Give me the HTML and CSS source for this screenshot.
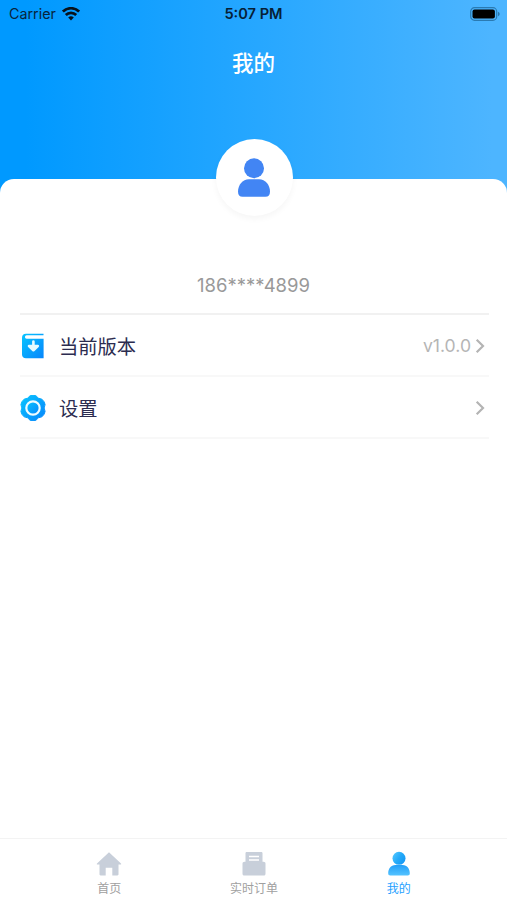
FILE: index.html
```html
<!DOCTYPE html>
<html lang="zh-CN">

<head>
  <meta charset="UTF-8">
  <meta name="viewport" content="width=device-width, initial-scale=1.0">
  <title>我的</title>
  <link rel="stylesheet" href="styles.css">
</head>

<body>
  <header class="header">
    <div class="status-bar">
      <div class="carrier">
        <span>Carrier</span>
        <svg class="wifi" viewBox="0 0 18 14" fill="none" stroke="#08121c" stroke-width="2.7">
          <path d="M.9 4.6a11.4 11.4 0 0 1 16.2 0" />
          <path d="M3.8 8a7.3 7.3 0 0 1 10.4 0" />
          <path d="M6.2 10.5a4 4 0 0 1 5.6 0L9 13.4z" fill="#08121c" stroke="none" />
        </svg>
      </div>
      <span class="time">5:07 PM</span>
      <svg class="battery" viewBox="0 0 30 14">
        <rect x="0.7" y="0.7" width="26" height="12.6" rx="3.8" fill="none" stroke="#1f6798" stroke-opacity="0.75" stroke-width="1.2" />
        <rect x="2.5" y="2.5" width="22.4" height="9" rx="2" fill="#000" />
        <path d="M28 4.8c2.2.8 2.2 3.6 0 4.4z" fill="#1f6798" fill-opacity="0.8" />
      </svg>
    </div>
    <h1>我的</h1>
  </header>

  <main class="sheet">
    <div class="avatar">
      <svg viewBox="0 0 34 40" fill="#4285f4">
        <circle cx="17" cy="10.2" r="10" />
        <path d="M12 21.3h10c6.500 0 11 5.700 11 12.500 0 3.300-1.500 5-4.600 5H5.600c-3.100 0-4.600-1.700-4.600-5C1 27 5.500 21.300 12 21.300z" />
      </svg>
    </div>
    <p class="phone">186****4899</p>

    <ul class="menu">
      <li>
        <svg class="icon" viewBox="0 0 26 26">
          <defs>
            <linearGradient id="blue" x1="0" y1="0" x2="1" y2="1">
              <stop offset="0" stop-color="#08c5ff" />
              <stop offset="1" stop-color="#0785fb" />
            </linearGradient>
          </defs>
          <path d="M6 .7h17.500v1.600H6.700c-2.200 0-2.200 3.500 0 3.500h16.900v19.400H6c-2.500 0-4-1.400-4-3.700V4.700C2 2.200 3.500.7 6 .7z" fill="url(#blue)" />
          <path d="M13.400 8.500v6M9 13l4.400 4.200L17.800 13z" fill="#e8fbff" stroke="#e8fbff" stroke-width="2.600" stroke-linecap="round" stroke-linejoin="round" />
        </svg>
        <span class="label">当前版本</span>
        <span class="value">v1.0.0</span>
        <svg class="arrow" viewBox="0 0 10 16"><path d="M1.700 1.700L8 8l-6.300 6.300" /></svg>
      </li>
      <li>
        <svg class="icon" viewBox="0 0 26 26">
          <path d="M10 .8Q13-.2 16 .8 17.800 3.800 21.900 4.200 24.600 6.500 25.100 9.600 23.200 13 25.100 16.400 24.600 19.500 21.900 21.800 17.800 22.200 16 25.200 13 26.200 10 25.200 8.200 22.200 4.100 21.800 1.400 19.500.9 16.400 2.800 13 .9 9.600 1.400 6.500 4.100 4.200 8.200 3.800 10 .8z" fill="url(#blue)" stroke="url(#blue)" stroke-linejoin="round" />
          <circle cx="13" cy="13" r="6.700" fill="url(#blue)" stroke="#effcff" stroke-width="2.200" />
        </svg>
        <span class="label">设置</span>
        <svg class="arrow" viewBox="0 0 10 16"><path d="M1.700 1.700L8 8l-6.300 6.300" /></svg>
      </li>
    </ul>
  </main>

  <nav class="tab-bar">
    <a class="tab">
      <svg viewBox="0 0 26 26" fill="#c8cfda">
        <path d="M13 1.200L25 12.400c.5.600.2 1-.5 1h-2v9.900c0 .7-.4 1.100-1.100 1.100h-5.100v-7.600H9.700v7.600H4.600c-.7 0-1.100-.4-1.100-1.100v-9.900h-2c-.7 0-1-.4-.5-1z" />
      </svg>
      <span>首页</span>
    </a>
    <a class="tab">
      <svg viewBox="0 0 26 26" fill="#c8cfda">
        <path d="M4.500 12V2.500c0-.9.500-1.400 1.400-1.400h14.200c.9 0 1.400.5 1.400 1.400V12z" />
        <path d="M1.500 12.700c0-1.200.8-1.900 2-1.900h19c1.200 0 2 .7 2 1.900v10c0 1.200-.6 1.800-1.800 1.800H3.300c-1.200 0-1.800-.6-1.800-1.800z" />
        <path d="M8 5.500h10M8 9h10" stroke="#fff" stroke-width="1.500" />
      </svg>
      <span>实时订单</span>
    </a>
    <a class="tab active">
      <svg viewBox="0 0 26 26">
        <defs>
          <linearGradient id="head" x1="0" y1="0" x2="1" y2="0.7">
            <stop offset="0" stop-color="#58caff" />
            <stop offset="0.55" stop-color="#25aaf9" />
            <stop offset="1" stop-color="#1598f4" />
          </linearGradient>
          <linearGradient id="body" x1="0" y1="0" x2="0" y2="1">
            <stop offset="0" stop-color="#239ff8" />
            <stop offset="1" stop-color="#54c3ff" />
          </linearGradient>
        </defs>
        <path d="M9.500 14h7c4.800 0 7.300 4 7.300 8.200 0 1.500-.7 2.200-2.100 2.200H4.300c-1.400 0-2.100-.7-2.100-2.200C2.200 18 4.700 14 9.500 14z" fill="url(#body)" />
        <circle cx="13" cy="7.300" r="6.500" fill="url(#head)" />
      </svg>
      <span>我的</span>
    </a>
  </nav>
</body>

</html>
```
FILE: styles.css
```css
* {
  box-sizing: border-box;
}

body {
  display: flex;
  flex-direction: column;
  height: 100vh;
  margin: 0;
  overflow: hidden;
  background: #fff;
  font-family: Inter, "Noto Sans CJK SC", sans-serif;
}

.header {
  flex: none;
  height: 193px;
  background: linear-gradient(90deg, #0099ff 5%, #4db5ff 97%);
}

.status-bar {
  display: grid;
  grid-template-columns: 1fr auto 1fr;
  align-items: center;
  height: 27px;
  padding: 0 7px 0 9px;
  color: #08253c;
  font-size: 14.3px;
}

.carrier {
  display: flex;
  align-items: center;
  gap: 6px;
}

.wifi {
  width: 18px;
  height: 14px;
}

.time {
  margin-right: 2px;
  color: #062036;
  font-size: 14.6px;
  font-weight: 600;
}

.battery {
  justify-self: end;
  width: 30px;
  height: 14px;
}

.header h1 {
  margin: 20px 0 0;
  color: #fff;
  font-size: 21.5px;
  font-weight: 500;
  line-height: 32px;
  text-align: center;
}

.sheet {
  display: flex;
  flex: 1;
  flex-direction: column;
  align-items: center;
  margin-top: -14px;
  padding: 0 18px 0 20px;
  background: #fff;
  border-radius: 14px 14px 0 0;
}

.avatar {
  display: flex;
  align-items: center;
  justify-content: center;
  width: 77px;
  height: 77px;
  margin: -40px 1px 0 0;
  background: #fff;
  border-radius: 50%;
  box-shadow: 0 3px 6px rgba(0, 0, 0, 0.04);
}

.avatar svg {
  width: 34px;
  height: 40px;
}

.phone {
  margin: 57px 2px 15px 0;
  color: #999;
  font-size: 18.5px;
  line-height: 25px;
}

.menu {
  width: 100%;
  margin: 0;
  padding: 0;
  border-top: 2px solid #f1f1f1;
  list-style: none;
}

.menu li {
  display: flex;
  align-items: center;
  height: 62px;
  padding: 1px 4px 0 0;
  border-bottom: 2px solid #f8f8f8;
}

.icon {
  width: 26px;
  height: 26px;
}

.label {
  margin-left: 13px;
  padding-top: 1px;
  color: #2c2c50;
  font-size: 19.3px;
}

.value {
  margin-left: auto;
  color: #b5b5b5;
  font-size: 17.6px;
}

.arrow {
  width: 10px;
  height: 16px;
  margin-left: auto;
  fill: none;
  stroke: #b4b4b4;
  stroke-width: 2.2;
}

.value + .arrow {
  margin-left: 4px;
}

.tab-bar {
  display: flex;
  flex: none;
  height: 62px;
  padding: 0 36px 0 37px;
  border-top: 1px solid #f3f3f3;
}

.tab {
  display: flex;
  flex: 1;
  flex-direction: column;
  align-items: center;
  padding-top: 12px;
  color: #a0a0a0;
  font-size: 12px;
  line-height: 23px;
}

.tab svg {
  width: 26px;
  height: 26px;
}

.tab.active {
  color: #269fff;
}
```
